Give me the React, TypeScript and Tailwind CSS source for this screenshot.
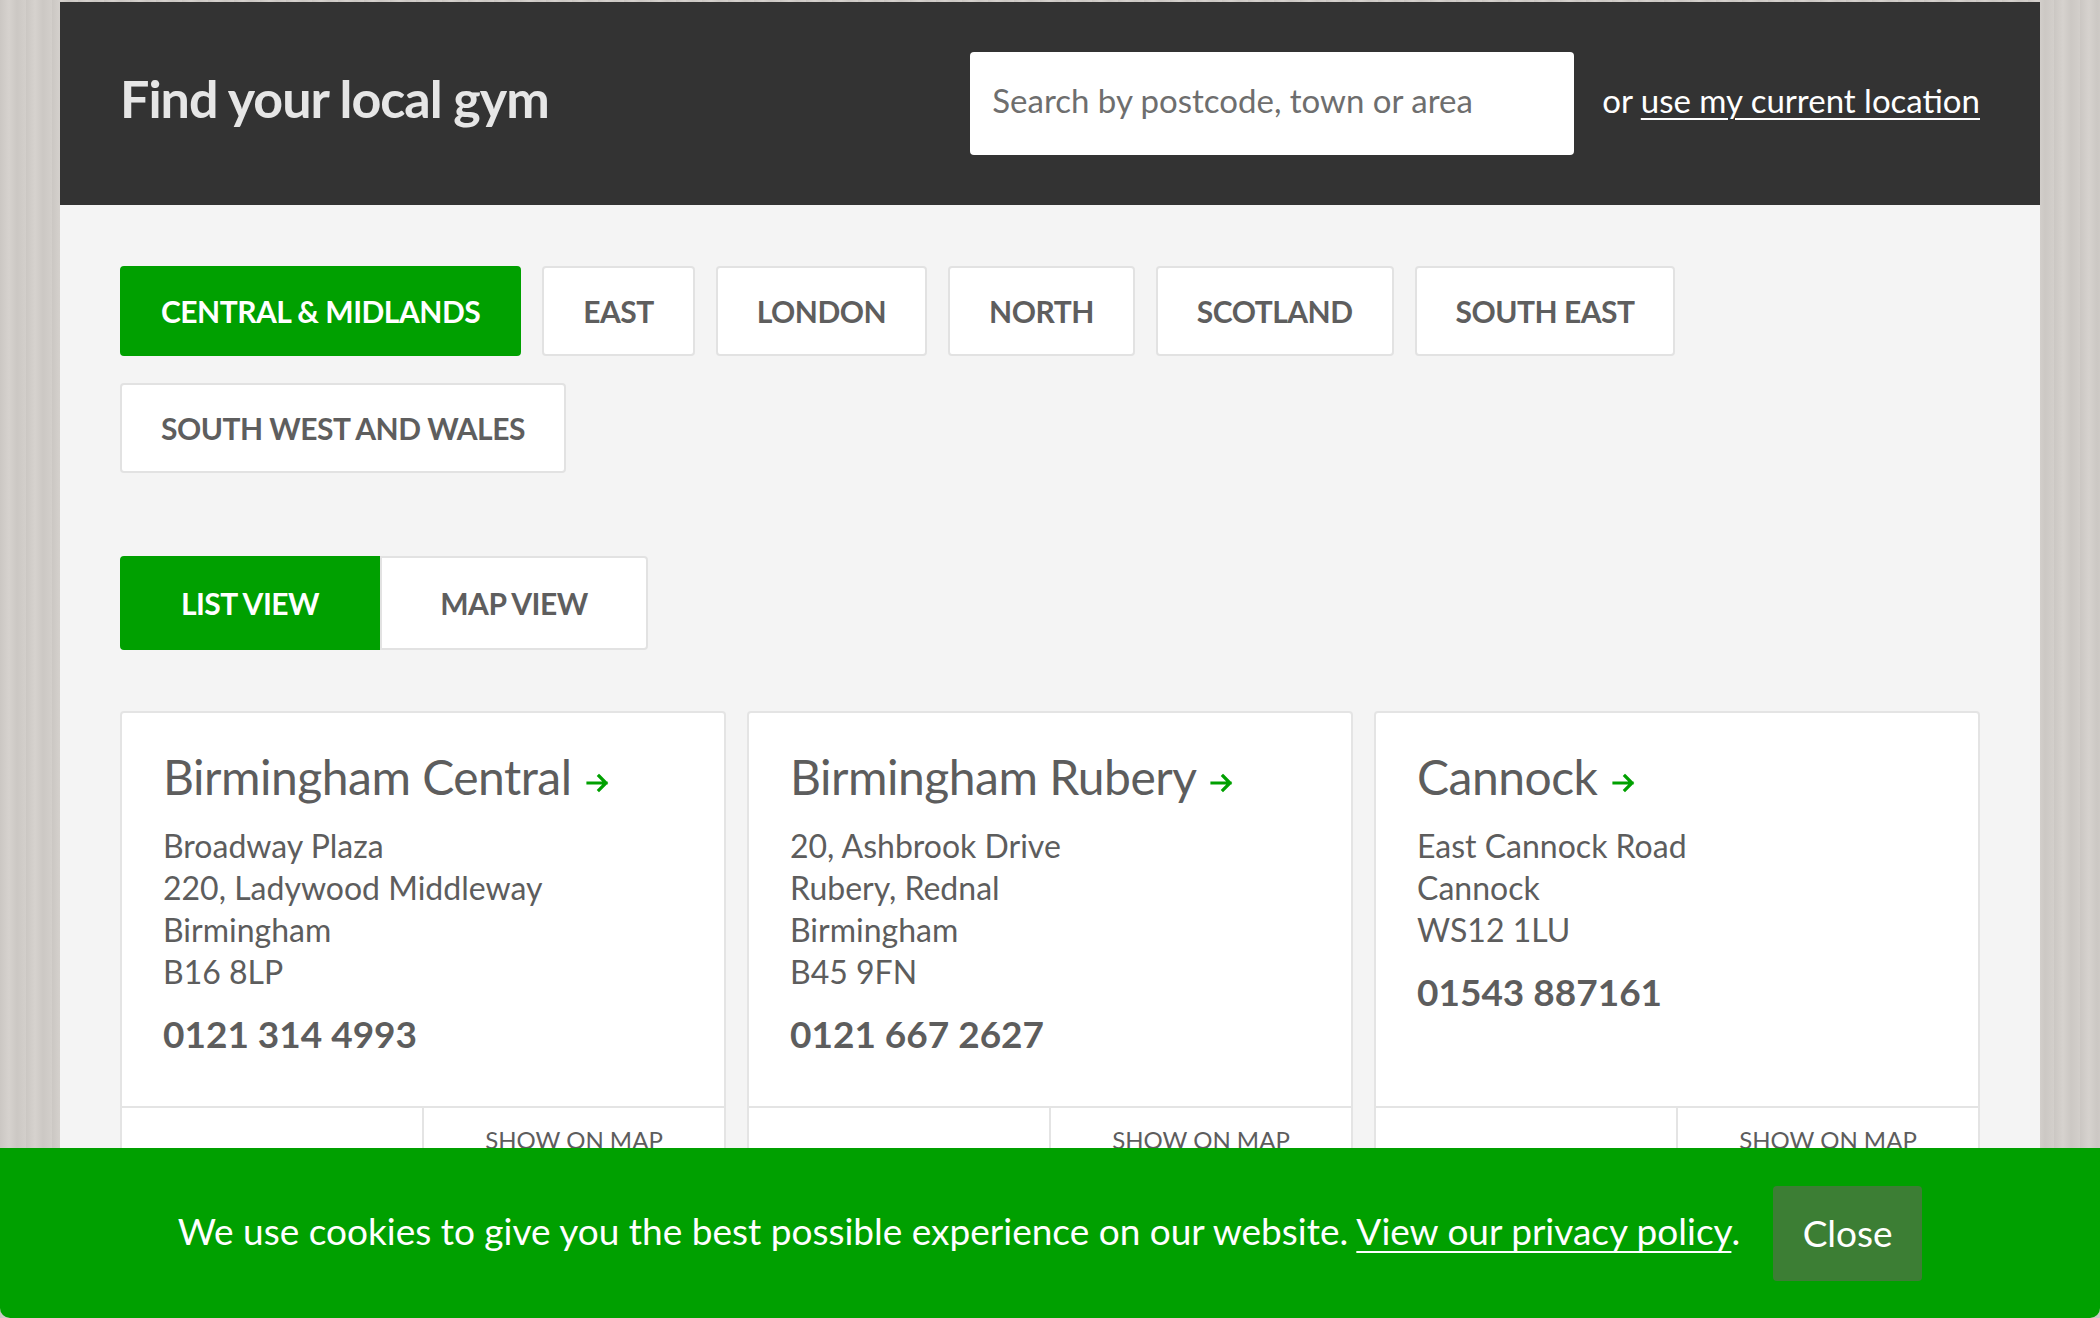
import { useState } from 'react';

const regions = ['Central & Midlands', 'East', 'London', 'North', 'Scotland', 'South East', 'South West and Wales'];

const gyms = [
    {
        name: 'Birmingham Central',
        address: ['Broadway Plaza', '220, Ladywood Middleway', 'Birmingham', 'B16 8LP'],
        phone: '0121 314 4993',
    },
    {
        name: 'Birmingham Rubery',
        address: ['20, Ashbrook Drive', 'Rubery, Rednal', 'Birmingham', 'B45 9FN'],
        phone: '0121 667 2627',
    },
    {
        name: 'Cannock',
        address: ['East Cannock Road', 'Cannock', 'WS12 1LU'],
        phone: '01543 887161',
    },
];

function GreenArrow() {
    return (
        <svg width="24" height="20" viewBox="0 0 24 20" className="inline-block ml-[14px] align-[2px]">
            <path d="M2 10h18M13 3l7 7-7 7" fill="none" stroke="#00a000" strokeWidth="3.2" strokeLinecap="square" />
        </svg>
    );
}

export default function App() {
    const [region, setRegion] = useState('Central & Midlands');
    const [view, setView] = useState('list');
    const [showCookies, setShowCookies] = useState(true);

    return (
        <div className="min-h-screen pt-[2px] bg-[#d0ccc8] bg-[repeating-linear-gradient(90deg,#cbc7c3_0px,#d6d2ce_9px,#ccc8c4_17px,#d3cfcb_26px)] font-[Lato,'Liberation_Sans',sans-serif] text-[#5d5d5d]">
            <div className="mx-auto w-[1980px] min-h-[1316px] bg-[#f4f4f4]">
                <header className="h-[203px] bg-[#333333] px-[60px] flex items-center justify-between">
                    <h1 className="text-[52px] font-bold tracking-[-1px] text-[#e6e6e6] -mt-[11px]">Find your local gym</h1>
                    <div className="flex items-center">
                        <input
                            type="text"
                            placeholder="Search by postcode, town or area"
                            className="w-[604px] h-[103px] rounded-[4px] bg-white px-[22px] pb-[7px] text-[33px] text-[#333] placeholder:text-[#6e6e6e] outline-none"
                        />
                        <p className="ml-[28px] -mt-[6px] text-[33px] text-white">
                            or <a href="#" className="underline underline-offset-[5px] decoration-2">use my current location</a>
                        </p>
                    </div>
                </header>

                <main className="px-[60px] pt-[61px]">
                    <div className="flex flex-wrap gap-x-[21px] gap-y-[27px] w-[1600px]">
                        {regions.map((r) => (
                            <button
                                key={r}
                                onClick={() => setRegion(r)}
                                className={`h-[90px] px-[39px] rounded-[4px] border-2 text-[30px] font-bold uppercase tracking-[-0.5px] ${
                                    region === r ? 'bg-[#00a000] border-[#00a000] text-white' : 'bg-white border-[#e2e2e2] text-[#5e5e5e]'
                                }`}
                            >
                                {r}
                            </button>
                        ))}
                    </div>

                    <div className="mt-[83px] flex">
                        <button
                            onClick={() => setView('list')}
                            className={`w-[260px] h-[94px] rounded-l-[4px] border-2 text-[30px] font-bold uppercase tracking-[-0.5px] ${
                                view === 'list' ? 'bg-[#00a000] border-[#00a000] text-white' : 'bg-white border-[#e2e2e2] text-[#5e5e5e]'
                            }`}
                        >
                            List view
                        </button>
                        <button
                            onClick={() => setView('map')}
                            className={`w-[268px] h-[94px] rounded-r-[4px] border-2 text-[30px] font-bold uppercase tracking-[-0.5px] ${
                                view === 'map' ? 'bg-[#00a000] border-[#00a000] text-white' : 'bg-white border-[#e2e2e2] text-[#5e5e5e]'
                            }`}
                        >
                            Map view
                        </button>
                    </div>

                    <div className="mt-[61px] grid grid-cols-3 gap-[21px]">
                        {gyms.map((gym) => (
                            <div key={gym.name} className="flex flex-col bg-white border-2 border-[#e4e4e4] rounded-[4px]">
                                <div className="h-[393px] px-[41px] pt-[34px]">
                                    <h3 className="text-[48px] leading-[60px] text-[#5d5d5d] tracking-[-0.5px]">
                                        {gym.name}
                                        <GreenArrow />
                                    </h3>
                                    <div className="mt-[18px] text-[32px] leading-[42px]">
                                        {gym.address.map((line) => (
                                            <div key={line}>{line}</div>
                                        ))}
                                    </div>
                                    <div className="mt-[16px] text-[37px] font-bold leading-[50px]">{gym.phone}</div>
                                </div>
                                <div className="flex h-[90px] border-t-2 border-[#e4e4e4]">
                                    <div className="flex-1 border-r-2 border-[#e4e4e4]" />
                                    <a href="#" className="flex-1 text-center pt-[14px] text-[24px] uppercase text-[#5d5d5d]">
                                        Show on map
                                    </a>
                                </div>
                            </div>
                        ))}
                    </div>
                </main>
            </div>

            {showCookies && (
                <div className="fixed bottom-0 left-0 right-0 h-[170px] bg-[#00a000] rounded-b-[10px] flex items-center justify-center text-white">
                    <p className="text-[37px] -mt-[4px]">
                        We use cookies to give you the best possible experience on our website.{' '}
                        <a href="#" className="underline underline-offset-[6px] decoration-2">View our privacy policy</a>.
                    </p>
                    <button
                        onClick={() => setShowCookies(false)}
                        className="ml-[33px] w-[149px] h-[95px] rounded-[4px] bg-[#3c7e34] text-[37px] text-white"
                    >
                        Close
                    </button>
                </div>
            )}
        </div>
    );
}
